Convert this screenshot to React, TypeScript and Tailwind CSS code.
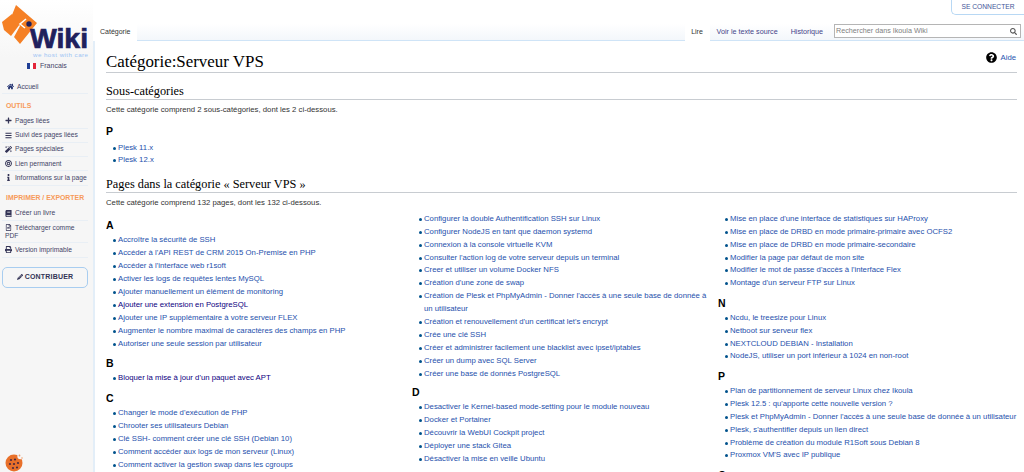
import React from "react";
import { FaHome, FaPlus, FaBars, FaMagic, FaBullseye, FaInfo, FaBook, FaRegFileAlt, FaPrint, FaPencilAlt, FaSearch, FaQuestionCircle } from "react-icons/fa";

const FONT = "[font-family:'Liberation_Sans',Arial,sans-serif]";
const SERIF = "[font-family:'Liberation_Serif','Times_New_Roman',serif]";

function Item({ text, visited }: { text: string; visited?: boolean }) {
  return (
    <li className="flex items-start leading-[12.9px] pl-[7px]">
      <span className="w-[5px] shrink-0 mt-[5px]">
        <span className="block w-[3px] h-[3px] rounded-full bg-[#00528c]" />
      </span>
      <span className={visited ? "text-[#0b0080]" : "text-[#1e50ac]"}>{text}</span>
    </li>
  );
}

function Group({ letter, items, mt }: { letter?: string; items: (string | [string])[]; mt?: string }) {
  return (
    <div className={mt}>
      {letter && <div className="text-[10.5px] font-bold text-black leading-[14px] h-[16px]">{letter}</div>}
      <ul>
        {items.map((x) =>
          Array.isArray(x) ? <Item key={x[0]} text={x[0]} visited /> : <Item key={x} text={x} />
        )}
      </ul>
    </div>
  );
}

function SideLink({ icon, children }: { icon: React.ReactNode; children: React.ReactNode }) {
  return (
    <div className="flex items-center pl-[3px] h-[14.25px] border-b border-[#e9eff5] w-[86px] text-[#444466]">
      <span className="w-[10px] shrink-0 flex justify-start text-[#333355]">{icon}</span>
      <span className="whitespace-nowrap">{children}</span>
    </div>
  );
}

function Logo() {
  return (
    <svg width="90" height="58" viewBox="0 0 90 58" className="block">
      <path d="M16 4 L37 22 L20 43 L14 36 L20 25 L12 14 Z" fill="#f58025" />
      <path d="M2 21 L12 13 L20 23 L11 35 L4 29 Z" fill="#f58025" />
      <path d="M26 18 L20 23 L25 27" fill="none" stroke="#ffffff" strokeWidth="1.6" />
      <circle cx="29" cy="23" r="2.7" fill="#20205c" />
      <text x="30" y="47" fontFamily="'Liberation Sans',Arial,sans-serif" fontWeight="700" fontSize="27" fill="#20205c" stroke="#20205c" strokeWidth="0.7" textLength="58" lengthAdjust="spacingAndGlyphs">Wiki</text>
      <text x="33" y="55.5" fontFamily="'Liberation Sans',Arial,sans-serif" fontSize="6.2" fill="#9cc4f4" textLength="55">we host with care</text>
    </svg>
  );
}

const colA: (string | [string])[] = ["Accroître la sécurité de SSH", "Accéder à l'API REST de CRM 2015 On-Premise en PHP", "Accéder à l'interface web r1soft", "Activer les logs de requêtes lentes MySQL", "Ajouter manuellement un élément de monitoring", ["Ajouter une extension en PostgreSQL"], "Ajouter une IP supplémentaire à votre serveur FLEX", "Augmenter le nombre maximal de caractères des champs en PHP", "Autoriser une seule session par utilisateur"];
const colC = ["Changer le mode d'exécution de PHP", "Chrooter ses utilisateurs Debian", "Clé SSH- comment créer une clé SSH (Debian 10)", "Comment accéder aux logs de mon serveur (Linux)", "Comment activer la gestion swap dans les cgroups"];
const col2 = ["Configurer la double Authentification SSH sur Linux", "Configurer NodeJS en tant que daemon systemd", "Connexion à la console virtuelle KVM", "Consulter l'action log de votre serveur depuis un terminal", "Creer et utiliser un volume Docker NFS", "Création d'une zone de swap", "Création de Plesk et PhpMyAdmin - Donner l'accès à une seule base de donnée à un utilisateur", "Création et renouvellement d'un certificat let's encrypt", "Crée une clé SSH", "Créer et administrer facilement une blacklist avec ipset/iptables", "Créer un dump avec SQL Server", "Créer une base de donnés PostgreSQL"];
const colD = ["Desactiver le Kernel-based mode-setting pour le module nouveau", "Docker et Portainer", "Découvrir la WebUI Cockpit project", "Déployer une stack Gitea", "Désactiver la mise en veille Ubuntu"];
const col3 = ["Mise en place d'une interface de statistiques sur HAProxy", "Mise en place de DRBD en mode primaire-primaire avec OCFS2", "Mise en place de DRBD en mode primaire-secondaire", "Modifier la page par défaut de mon site", "Modifier le mot de passe d'accès à l'interface Flex", "Montage d'un serveur FTP sur Linux"];
const colN = ["Ncdu, le treesize pour Linux", "Netboot sur serveur flex", "NEXTCLOUD DEBIAN - Installation", "NodeJS, utiliser un port inférieur à 1024 en non-root"];
const colP = ["Plan de partitionnement de serveur Linux chez Ikoula", "Plesk 12.5 : qu'apporte cette nouvelle version ?", "Plesk et PhpMyAdmin - Donner l'accès à une seule base de donnée à un utilisateur", "Plesk, s'authentifier depuis un lien direct", "Problème de création du module R1Soft sous Debian 8", "Proxmox VM'S avec IP publique"];

export default function App() {
  return (
    <div className={`${FONT} w-[1024px] h-[472px] overflow-hidden flex bg-white text-[7.75px] text-[#333333]`}>
      <aside className="w-[93px] shrink-0 h-full bg-[#f6f6f6] relative text-[6.7px]">
        <div className="h-[58px] pt-[1px] bg-gradient-to-b from-white to-[#f6f6f6]"><Logo /></div>
        <div className="flex items-center gap-[4px] h-[10px] mt-[3px] text-[#444466] pl-[27px]">
          <span className="flex w-[9px] h-[6px]"><span className="flex-1 bg-[#1f3f95]" /><span className="flex-1 bg-white" /><span className="flex-1 bg-[#e3263a]" /></span>
          <span className="text-[7px]">Francais</span>
        </div>
        <div className="mt-[9px] ml-[2px]">
          <SideLink icon={<FaHome size={7} color="#1f2f6f" className="ml-[2px]" />}><span className="ml-[2px]">Accueil</span></SideLink>
        </div>
        <div className="text-[#f79a5a] font-bold text-[6.9px] pl-[6px] mt-[7px] h-[10px] leading-[10px]">OUTILS</div>
        <div className="ml-[2px] mt-[3px]">
          <SideLink icon={<FaPlus size={7} />}>Pages liées</SideLink>
          <SideLink icon={<FaBars size={7} />}>Suivi des pages liées</SideLink>
          <SideLink icon={<FaMagic size={7} />}>Pages spéciales</SideLink>
          <SideLink icon={<FaBullseye size={7} />}>Lien permanent</SideLink>
          <SideLink icon={<FaInfo size={7} />}><span>Informations sur la page</span></SideLink>
        </div>
        <div className="text-[#f79a5a] font-bold text-[6.9px] pl-[6px] mt-[7px] h-[10px] leading-[10px]">IMPRIMER / EXPORTER</div>
        <div className="ml-[2px] mt-[4px]">
          <SideLink icon={<FaBook size={7} />}>Créer un livre</SideLink>
          <div className="pl-[3px] pt-[3px] pb-[3px] border-b border-[#e9eff5] w-[86px] leading-[7.5px] text-[#444466]">
            <div className="flex items-center h-[8px]"><span className="w-[10px] flex justify-start text-[#333355]"><FaRegFileAlt size={7} /></span><span className="whitespace-nowrap">Télécharger comme</span></div>
            <div>PDF</div>
          </div>
          <SideLink icon={<FaPrint size={7} />}>Version imprimable</SideLink>
        </div>
        <div className="mt-[9px] ml-[2px] w-[86px] h-[21px] border border-[#a8cdf0] rounded-[5px] flex items-center justify-center gap-[2px] text-[#333355] font-bold text-[7px] tracking-[0.2px]">
          <FaPencilAlt size={6} />CONTRIBUER
        </div>
        <div className="absolute left-[5px] top-[453px]">
          <svg width="18" height="19" viewBox="0 0 18 19">
            <circle cx="9" cy="10" r="8.5" fill="#e8702a" />
            <circle cx="15.5" cy="3" r="3.2" fill="#f6f6f6" />
            <circle cx="14.5" cy="2.5" r="0.9" fill="#f0a070" />
            <circle cx="17" cy="5" r="0.8" fill="#f0a070" />
            {[[6, 7], [10, 6.5], [5, 11], [9, 11], [13, 10], [8, 15], [12, 14.5]].map(([x, y]) => (
              <circle key={x * 10 + y} cx={x} cy={y} r="1.1" fill="#4a2a40" />
            ))}
          </svg>
        </div>
      </aside>

      <div className="flex-1 min-w-0 h-full flex flex-col relative">
        <div className="absolute right-0 top-0 w-[73px] h-[15px] border border-r-0 border-t-0 border-[#b8d8f4] rounded-bl-[5px] flex items-center justify-center text-[6.7px] text-[#445599]">SE CONNECTER</div>
        <div className="h-[41px] shrink-0 flex items-end">
          <div className="h-[17px] pl-[6px] ml-[1px] flex items-center bg-white text-[#333333] w-[43px] text-[7px]">Catégorie</div>
          <div className="flex-1 h-[17px] bg-gradient-to-b from-white to-[#f3f7fb] border-b border-[#cfe4f7]" />
          <div className="h-[17px] flex items-center w-[25px] justify-center bg-white text-[#333333] text-[7px]">Lire</div>
          <div className="h-[17px] flex items-center text-[#444488] text-[7.2px] gap-[13px] pl-[7px] pr-[11px] bg-gradient-to-b from-white to-[#f3f7fb] border-b border-[#cfe4f7]">
            <span>Voir le texte source</span><span>Historique</span>
          </div>
          <div className="h-[17px] w-[190px] bg-gradient-to-b from-white to-[#f3f7fb] border-b border-[#cfe4f7]">
            <div className="h-[14px] w-[187px] border border-[#b5b5b5] bg-white flex items-center justify-between pl-[1px] pr-[3px] text-[#808080] text-[7.2px]">
              <span>Rechercher dans Ikoula Wiki</span>
              <FaSearch size={7} color="#555555" />
            </div>
          </div>
        </div>

        <main className="flex-1 min-h-0 border-l-2 border-[#e3eef8] pl-[11px] pr-[7px] relative">
          <div className="absolute right-[8px] top-[11px] flex items-center gap-[3px] text-[#2a55b0] text-[7.75px]">
            <FaQuestionCircle size={11} color="#000000" />
            <span>Aide</span>
          </div>
          <h1 className={`${SERIF} text-[16.9px] leading-[22px] text-black pt-[10px] h-[32px] border-b border-[#c8ccd1]`}>Catégorie:Serveur VPS</h1>
          <h2 className={`${SERIF} text-[12.3px] leading-[15px] text-black mt-[11px] border-b border-[#c8ccd1] h-[16px]`}>Sous-catégories</h2>
          <p className="mt-[2.5px] leading-[13px]">Cette catégorie comprend 2 sous-catégories, dont les 2 ci-dessous.</p>
          <Group mt="mt-[8.5px]" letter="P" items={[]} />
          <ul className="mt-[1.5px]">
            <Item text="Plesk 11.x" /><Item text="Plesk 12.x" />
          </ul>
          <h2 className={`${SERIF} text-[12.3px] leading-[15px] text-black mt-[10px] border-b border-[#c8ccd1] h-[16px]`}>Pages dans la catégorie « Serveur VPS »</h2>
          <p className="mt-[2.5px] leading-[13px]">Cette catégorie comprend 132 pages, dont les 132 ci-dessous.</p>
          <div className="grid grid-cols-3 mt-[4px] w-[918px] h-[260px] overflow-hidden">
            <div className="pr-[4px] pt-[5.5px]">
              <Group letter="A" items={colA} />
              <Group mt="mt-[6px]" letter="B" items={[["Bloquer la mise à jour d'un paquet avec APT"]]} />
              <Group mt="mt-[6px]" letter="C" items={colC} />
            </div>
            <div className="pr-[4px]">
              <Group items={col2} />
              <Group mt="mt-[4.5px]" letter="D" items={colD} />
            </div>
            <div className="pr-[4px]">
              <Group items={col3} />
              <Group mt="mt-[5.5px]" letter="N" items={colN} />
              <Group mt="mt-[5.5px]" letter="P" items={colP} />
              <Group mt="mt-[5.5px]" letter="Q" items={[]} />
            </div>
          </div>
        </main>
      </div>
    </div>
  );
}
